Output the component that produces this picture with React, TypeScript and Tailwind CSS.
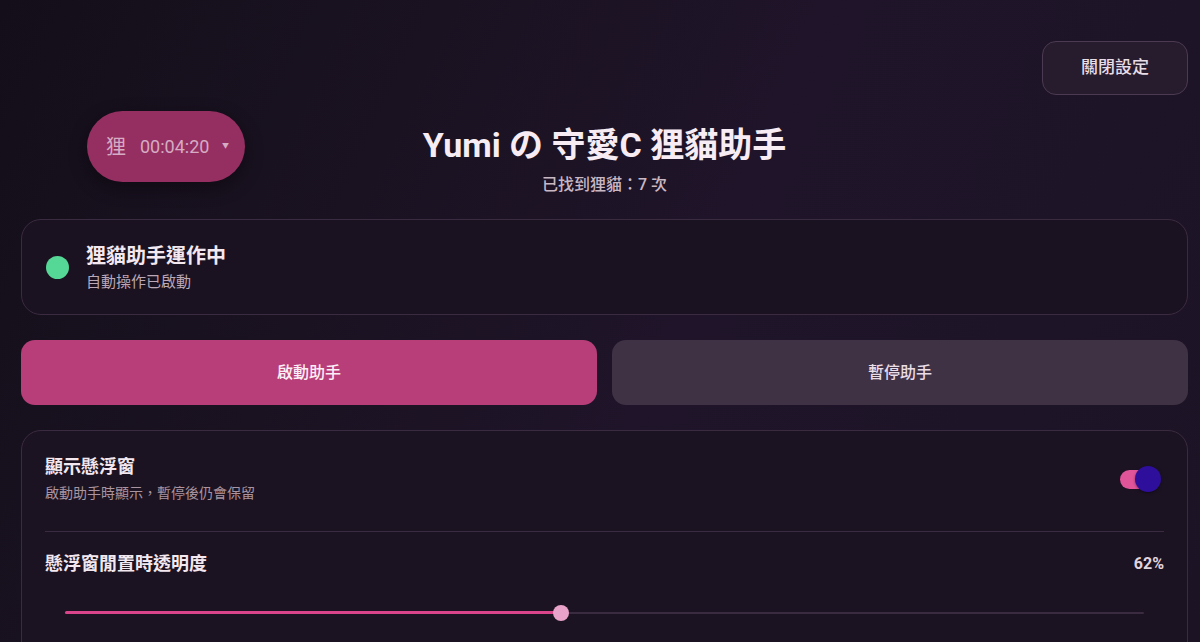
import React from "react";

const font = { fontFamily: "Roboto, 'Noto Sans CJK TC', 'Noto Sans', sans-serif" };

function FloatingTimer() {
  return (
    <div className="absolute left-[87px] top-[111px] flex h-[71px] w-[158px] items-center rounded-full bg-[#952f62] pl-[19px] pr-[16px] text-[#d6abc3] shadow-[0_6px_18px_rgba(0,0,0,0.35)]">
      <span className="text-[20px] leading-none">狸</span>
      <span className="ml-[14px] text-[18px] leading-none">00:04:20</span>
      <span className="ml-auto text-[7px] leading-none">▼</span>
    </div>
  );
}

function Toggle() {
  return (
    <div className="relative h-[26px] w-[41px]">
      <div className="absolute left-0 top-[4px] h-[19px] w-[36px] rounded-full bg-[#e0559a]" />
      <div className="absolute right-0 top-0 h-[26px] w-[26px] rounded-full bg-[#2e0f9c] shadow-[0_1px_3px_rgba(0,0,0,0.4)]" />
    </div>
  );
}

export default function App() {
  return (
    <div
      style={font}
      className="relative h-[642px] w-full overflow-hidden bg-[linear-gradient(115deg,#140e1a_0%,#1a1221_30%,#1f1429_55%,#1e1428_80%,#1c1325_100%)] pl-[21px] pr-[12px] text-[#f3e8f0]"
    >
      <div className="flex justify-end pt-[41px]">
        <button className="h-[54px] w-[146px] rounded-[14px] border border-[#4b3a52] bg-[#271c2d] text-[17px] font-medium text-[#e8dce6]">
          關閉設定
        </button>
      </div>

      <FloatingTimer />

      <div className="mt-[30px] flex flex-col items-center">
        <h1 className="text-[34px] font-bold leading-[40px] text-[#f7ecf3]">Yumi の 守愛C 狸貓助手</h1>
        <p className="mt-[10px] text-[16px] font-medium leading-[20px] text-[#c8b8c4]">已找到狸貓：7 次</p>
      </div>

      <div className="mt-[24px] flex h-[96px] items-center gap-[17px] rounded-[20px] border border-[#3b2b41] bg-[#1b1221] px-6">
        <span className="h-[23px] w-[23px] rounded-full bg-[#55d896]" />
        <div className="flex flex-col">
          <span className="text-[20px] font-bold leading-[26px] text-[#f3e8f0]">狸貓助手運作中</span>
          <span className="mt-[3px] text-[15px] leading-[20px] text-[#bba8b7]">自動操作已啟動</span>
        </div>
      </div>

      <div className="mt-[25px] grid grid-cols-2 gap-[15px]">
        <button className="h-[65px] rounded-[14px] bg-[#b83e79] text-[16px] font-medium text-[#fbeff6]">啟動助手</button>
        <button className="h-[65px] rounded-[14px] bg-[#3f3245] text-[16px] font-medium text-[#eadde7]">暫停助手</button>
      </div>

      <div className="mt-[25px] h-[260px] rounded-[20px] border border-[#3b2b41] bg-[#1c1322] px-[23px] pt-[23px]">
        <div className="flex items-center justify-between">
          <div className="flex flex-col">
            <span className="text-[18px] font-bold leading-[26px] text-[#f3e8f0]">顯示懸浮窗</span>
            <span className="mt-[3px] text-[14px] leading-[20px] text-[#a9949f]">啟動助手時顯示，暫停後仍會保留</span>
          </div>
          <div className="mr-[3px]">
            <Toggle />
          </div>
        </div>

        <div className="mt-[28px] h-px bg-[#3a2b40]" />

        <div className="mt-[19px] flex items-center justify-between">
          <span className="text-[18px] font-bold leading-[26px] text-[#f3e8f0]">懸浮窗閒置時透明度</span>
          <span className="text-[16px] font-bold leading-[26px] text-[#e2d4de]">62%</span>
        </div>

        <div className="relative mx-[20px] mt-[28px] h-[16px]">
          <div className="absolute left-0 right-0 top-[7px] h-[2px] rounded-full bg-[#3a2b40]" />
          <div className="absolute left-0 top-[6px] h-[3px] w-[46%] rounded-full bg-[#d9448a]" />
          <div className="absolute left-[46%] top-0 h-[16px] w-[16px] -translate-x-1/2 rounded-full bg-[#e9a2c9]" />
        </div>
      </div>
    </div>
  );
}
